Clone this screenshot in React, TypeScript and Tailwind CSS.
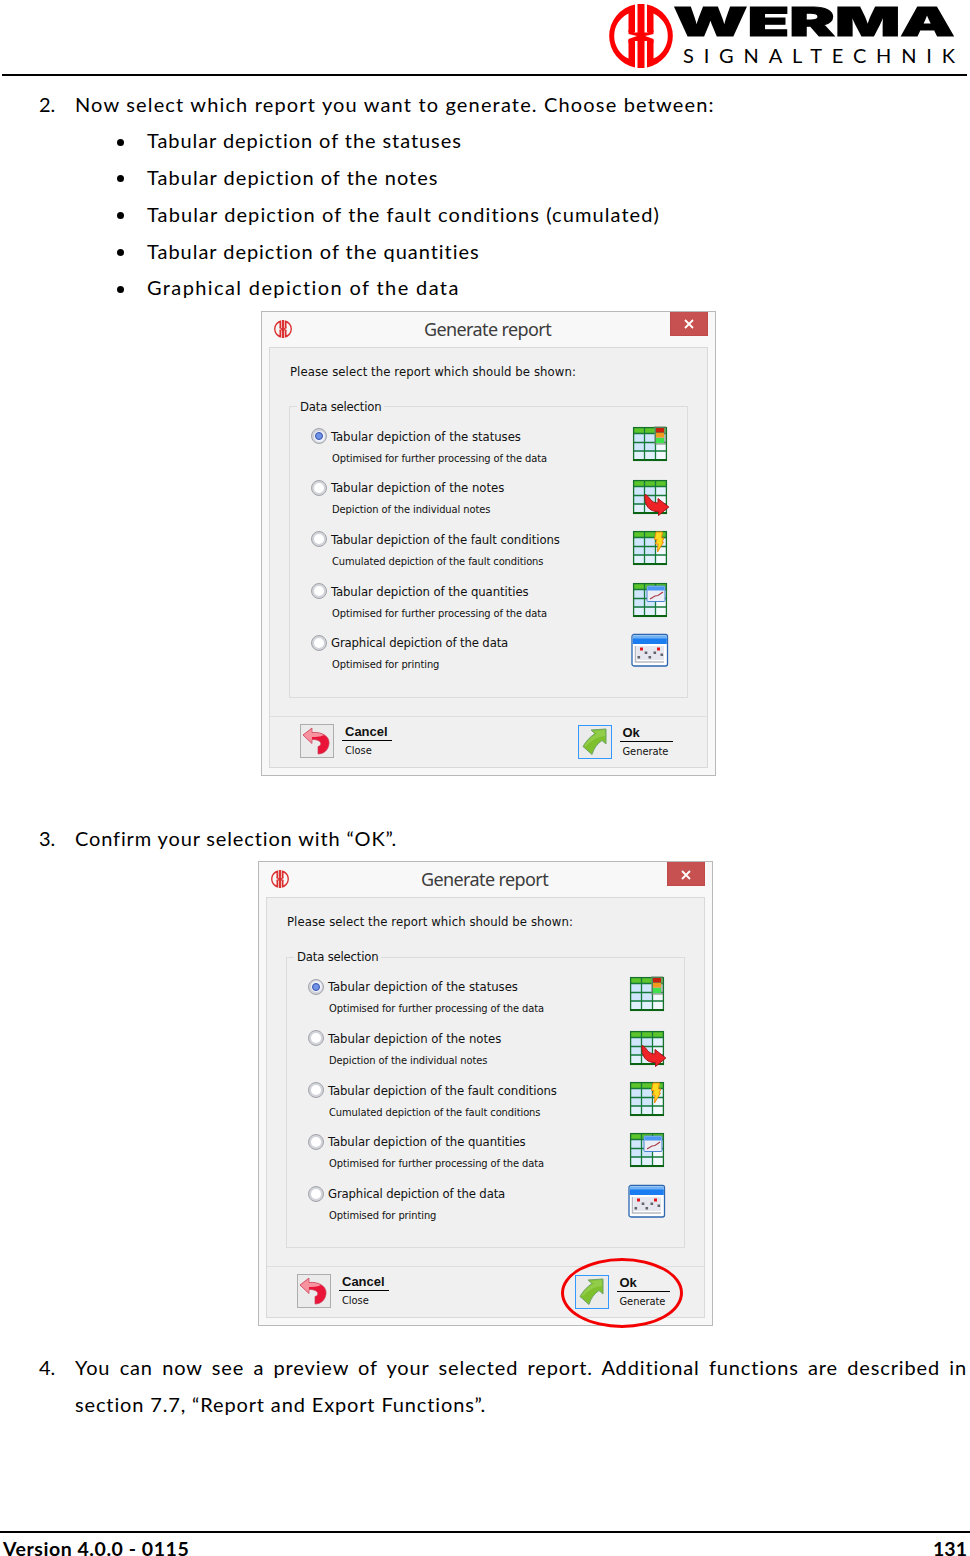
import type { ReactNode } from "react";

const BULLETS = [
  { text: "Tabular depiction of the statuses", tracking: "tracking-[0.93px]" },
  { text: "Tabular depiction of the notes", tracking: "tracking-[1.02px]" },
  { text: "Tabular depiction of the fault conditions (cumulated)", tracking: "tracking-[1.09px]" },
  { text: "Tabular depiction of the quantities", tracking: "tracking-[0.97px]" },
  { text: "Graphical depiction of the data", tracking: "tracking-[1.38px]" },
];

const OPTIONS = [
  { title: "Tabular depiction of the statuses", hint: "Optimised for further processing of the data", icon: "status", tracking: "tracking-[-0.03px]" },
  { title: "Tabular depiction of the notes", hint: "Depiction of the individual notes", icon: "notes", tracking: "tracking-[-0.03px]" },
  { title: "Tabular depiction of the fault conditions", hint: "Cumulated depiction of the fault conditions", icon: "fault", tracking: "tracking-[-0.08px]" },
  { title: "Tabular depiction of the quantities", hint: "Optimised for further processing of the data", icon: "quantity", tracking: "tracking-[-0.07px]" },
  { title: "Graphical depiction of the data", hint: "Optimised for printing", icon: "chart", tracking: "tracking-[-0.15px]" },
];

function Emblem({ size, color }: { size: number; color: string }) {
  return (
    <svg width={size} height={size} viewBox="0 0 64 64" fill={color} className="shrink-0">
      {/* outer arcs */}
      <path d="M26 0.6A32 32 0 0 0 26 63.4V36H19.5V54.6A25 25 0 0 1 19.5 9.4V28H26Z" />
      <path d="M38 0.6A32 32 0 0 1 38 63.4V36H44.5V54.6A25 25 0 0 0 44.5 9.4V28H38Z" />
      {/* centre stem and crossing */}
      <path d="M28.5 0H35.5V64H28.5Z" />
      <path d="M19.5 26L26 28.5H38L44.5 26V30L36 32L44.5 35V39L38 37H26L19.5 39V35L28 32L19.5 30Z" />
    </svg>
  );
}

function Brand() {
  return (
    <div className="flex items-start">
      <Emblem size={64} color="#ff0000" />
      <svg width="286" height="68" viewBox="0 -4 286 68" className="-mt-1 -mr-0.5 overflow-visible">
        <text
          x="0.5"
          y="31.5"
          fontFamily="Inter, sans-serif"
          fontWeight="900"
          fontSize="40"
          stroke="#000"
          strokeWidth="1"
          textLength="281"
          lengthAdjust="spacingAndGlyphs"
        >
          WERMA
        </text>
        <text x="10" y="59" fontFamily="Lato, sans-serif" fontSize="20" textLength="272" lengthAdjust="spacing">
          SIGNALTECHNIK
        </text>
      </svg>
    </div>
  );
}

function Grid() {
  return (
    <>
      <rect x="3" y="1" width="34" height="34" fill="#e3f1ff" />
      <path d="M3 7H26V26H3Z" fill="#cfe6fd" />
      <path d="M25 16H37V34H25Z" fill="#f4f9ff" />
      <rect x="3" y="1" width="34" height="6" fill="#5cc52c" />
      <path d="M3 7.5H37M3 16.5H37M3 25H37M14.5 2V34M25.5 2V34" stroke="#157a3a" strokeWidth="1.3" />
      <rect x="3.6" y="1.6" width="32.8" height="32.8" fill="none" stroke="#15702c" strokeWidth="1.3" />
      <rect x="3" y="33" width="34" height="2" fill="#0a6413" />
    </>
  );
}

function ReportIcon({ kind }: { kind: string }) {
  return (
    <svg width="40" height="42" viewBox="0 0 40 42" className="shrink-0">
      {kind !== "chart" && (
        <g transform={kind === "status" ? undefined : kind === "notes" ? "translate(0 2)" : "translate(0 1)"}>
          <Grid />
        </g>
      )}
      {kind === "status" && (
        <>
          <rect x="24" y="0" width="12" height="19" fill="#7d8f7a" opacity=".55" />
          <rect x="26" y="2" width="8" height="4.5" fill="#c8200c" />
          <rect x="26" y="7" width="8" height="4.5" fill="#f39a1c" />
          <rect x="26" y="12" width="8" height="5" fill="#3fe04d" />
        </>
      )}
      {kind === "notes" && (
        <path
          d="M15 17.5C20 19 20 26 28 26V21.5L38.8 30L28.5 38.5V34.5C19 35 14 28 15 17.5Z"
          fill="#ee2328"
          stroke="#a51218"
          strokeWidth="1"
          strokeLinejoin="round"
        />
      )}
      {kind === "fault" && (
        <path d="M26 3H32.5L31.5 9H34L32 13H33.5L27.5 23L28 15H25.5L27 10.5H24.5Z" fill="#ffd91e" stroke="#f08a10" strokeWidth="1" />
      )}
      {kind === "quantity" && (
        <>
          <rect x="17" y="5" width="18" height="15.5" rx="1" fill="#eceef5" stroke="#4c83cf" />
          <rect x="17.5" y="5.5" width="17" height="4" fill="#4b97f3" />
          <path d="M20 18L25 15L28 14.5L33 11" fill="none" stroke="#a83b45" strokeWidth="1.2" />
        </>
      )}
      {kind === "chart" && (
        <>
          <rect x="2" y="2.5" width="35.5" height="31.5" rx="2" fill="#fff" stroke="#2c66b0" strokeWidth="1.3" />
          <rect x="2.8" y="3.5" width="34" height="4" fill="#6fb1f5" />
          <rect x="2.8" y="6.5" width="34" height="5.5" fill="#1b7df0" />
          <path d="M7 14H34V28H7Z" fill="#e6e6ee" />
          <path d="M5.5 14V30H34" fill="none" stroke="#b9b9c3" strokeWidth="1.5" />
          <path d="M10 15.500h3v3h-3zM27 15.500h3v3h-3z" fill="#e0161b" />
          <path d="M7.500 24h2.600v2.600h-2.600zM14.700 19.500h2.600v2.600h-2.600zM18.500 24h2.600v2.600h-2.600zM23.500 19.500h2.600v2.600h-2.600zM30.500 21.500h2.600v2.600h-2.600z" fill="#62626b" />
        </>
      )}
    </svg>
  );
}

function Radio({ checked }: { checked: boolean }) {
  return (
    <span className="flex size-4 shrink-0 items-center justify-center rounded-full border border-[#a3a5ab] bg-[#d2d4da]">
      {checked ? (
        <span className="flex size-[11px] items-center justify-center rounded-full bg-[#eef2fa]">
          <span className="size-2 rounded-full border border-[#3550a8] bg-[#6f92e6]" />
        </span>
      ) : (
        <span className="size-[10px] rounded-full bg-white" />
      )}
    </span>
  );
}

function FooterAction(props: { title: string; hint: string; className: string; frame: string; line: string; children: ReactNode }) {
  return (
    <div className={`flex items-start ${props.className}`}>
      <button className={`flex h-[34px] w-[34px] items-center justify-center border ${props.frame}`}>
        <svg width="32" height="32" viewBox="0 0 32 32">{props.children}</svg>
      </button>
      <div className="pl-2">
        <p className="h-4 pl-[3px] font-['Liberation_Sans',Arial,sans-serif] text-[13px] leading-[15px] font-bold">{props.title}</p>
        <div className={`h-px bg-black ${props.line}`} />
        <p className="pl-[3px] text-[11px] leading-[20px] tracking-[-0.05px]">{props.hint}</p>
      </div>
    </div>
  );
}

function Dialog() {
  return (
    <div className="h-[465px] w-[455px] border border-[#b9b9b9] bg-[#f8f8f8] font-['DejaVu_Sans_Condensed','DejaVu_Sans',sans-serif] text-[#111]">
      <div className="flex h-[35px] items-start">
        <div className="flex w-[62px] pt-2 pl-3">
          <Emblem size={18} color="#dc3030" />
        </div>
        <h2 className="flex-1 pt-[4px] pr-[22px] pl-[3px] text-center font-['Noto_Sans',sans-serif] text-[18px] leading-[26px] tracking-[-0.6px] whitespace-nowrap text-[#3c3c3c]">
          Generate report
        </h2>
        <button className="mr-[7px] flex h-6 w-[38px] items-center justify-center border border-t-0 border-[#bf4a4a] bg-[#c75050]">
          <svg width="10" height="10" viewBox="0 0 10 10" className="mt-0.5">
            <path d="M1 1L9 9M9 1L1 9" stroke="#fff" strokeWidth="1.8" />
          </svg>
        </button>
      </div>

      <div className="mx-[7px] h-[421px] border border-[#d9d9d9] bg-[#f0f0f0] text-[13px]">
        <p className="mt-3.5 pl-5 leading-5 tracking-[0.07px]">Please select the report which should be shown:</p>

        <fieldset className="mx-[19px] mt-[15px] h-[301px] border border-[#dcdcdc] pr-[17px] pl-[21px]">
          <legend className="-ml-3.5 px-[3px] leading-5 tracking-[-0.2px]">Data selection</legend>
          <div className="pt-[9px]">
            {OPTIONS.map((o, i) => (
              <div key={o.icon} className="flex h-[51.7px] items-start">
                <div className="flex h-[21px] items-center">
                  <Radio checked={i === 0} />
                </div>
                <div className="flex-1 pl-1 whitespace-nowrap">
                  <p className={`leading-[22px] ${o.tracking}`}>{o.title}</p>
                  <p className="pl-px text-[11px] leading-[21px] tracking-[-0.08px]">{o.hint}</p>
                </div>
                <ReportIcon kind={o.icon} />
              </div>
            ))}
          </div>
        </fieldset>

        <div className="mt-[18px] flex h-[51px] justify-between border-t border-[#dedede] pr-[34.5px] pl-[30px]">
          <FooterAction title="Cancel" hint="Close" className="pt-[7px]" frame="border-[#adadad] bg-[#ebebeb]" line="w-[50px]">
            <path d="M2 10L11 3V7.5C22 6.5 29 12 28 19C27 26 22 29 17 29V21.5C21 21 22 14.5 11 14.5V18.5Z" fill="#ea1438" />
            <path d="M2 10L11 3V7.5C16 7 20 8 23 10C19 12 14 12 11 12V18.5Z" fill="#f7939f" />
            <path d="M2 10L11 3V7.5C22 6.5 29 12 28 19C27 26 22 29 17 29V21.5C21 21 22 14.5 11 14.5V18.5Z" fill="none" stroke="#c9405a" strokeWidth=".7" />
          </FooterAction>
          <FooterAction title="Ok" hint="Generate" className="pt-2" frame="border-[#3399ff] bg-[#ebebeb]" line="w-[53px]">
            <path d="M12 4L27 3L27 18L23 14.5C18 18 15 22 13 28.5L4 20.5C7 15 11 11 16 7.5Z" fill="#7fc02e" stroke="#6fa566" strokeWidth="1" />
            <path d="M14 5L26 4L26 10C17 11 12 15 7 20L5 20C8 15 12 11 18 7.5Z" fill="#a5d965" opacity=".5" />
          </FooterAction>
        </div>
      </div>
    </div>
  );
}

function Step({ n, children }: { n: number; children: ReactNode }) {
  return (
    <div className="flex leading-[36.75px]">
      <span className="w-9 shrink-0">{n}.</span>
      <div className="flex-1">{children}</div>
    </div>
  );
}

export default function App() {
  return (
    <div className="flex h-[1556px] w-[970px] flex-col bg-white font-[Lato,sans-serif] text-xl text-black">
      <header className="mr-[3px] ml-0.5 flex h-[76px] shrink-0 items-start justify-end border-b-2 border-black pt-[4px] pr-[10px]">
        <Brand />
      </header>

      <main className="flex-1 pt-[9.5px] pr-[3px] pl-[39px]">
        <Step n={2}>
          <p className="tracking-[1.16px]">Now select which report you want to generate. Choose between:</p>
          <ul className="pl-10">
            {BULLETS.map((b) => (
              <li key={b.text} className="flex items-center">
                <span className="mt-[3px] mr-[23px] ml-[2px] size-[7px] rounded-full bg-black" />
                <span className={b.tracking}>{b.text}</span>
              </li>
            ))}
          </ul>
        </Step>
        <div className="mt-[4.5px] ml-[222px]">
          <Dialog />
        </div>

        <div className="mt-[44px]">
          <Step n={3}>
            <p className="tracking-[0.86px]">Confirm your selection with “OK”.</p>
          </Step>
        </div>
        <div className="relative mt-[5px] ml-[219px] w-[455px]">
          <Dialog />
          {/* highlight round the Ok button */}
          <div className="absolute top-[397px] left-[303px] h-[70px] w-[122px] rounded-[50%] border-3 border-[#f40000]" />
        </div>

        <div className="mt-[23px]">
          <Step n={4}>
            <p className="text-justify tracking-[0.86px]">
              You can now see a preview of your selected report. Additional functions are described in section 7.7, “Report and Export
              Functions”.
            </p>
          </Step>
        </div>
      </main>

      <footer className="flex h-[25px] shrink-0 items-start justify-between border-t-2 border-black pt-[5px] pr-[3px] pl-[3px] text-[19.5px] font-bold">
        <span className="leading-[22px] tracking-[0.55px]">Version 4.0.0 - 0115</span>
        <span className="leading-[22px]">131</span>
      </footer>
    </div>
  );
}
